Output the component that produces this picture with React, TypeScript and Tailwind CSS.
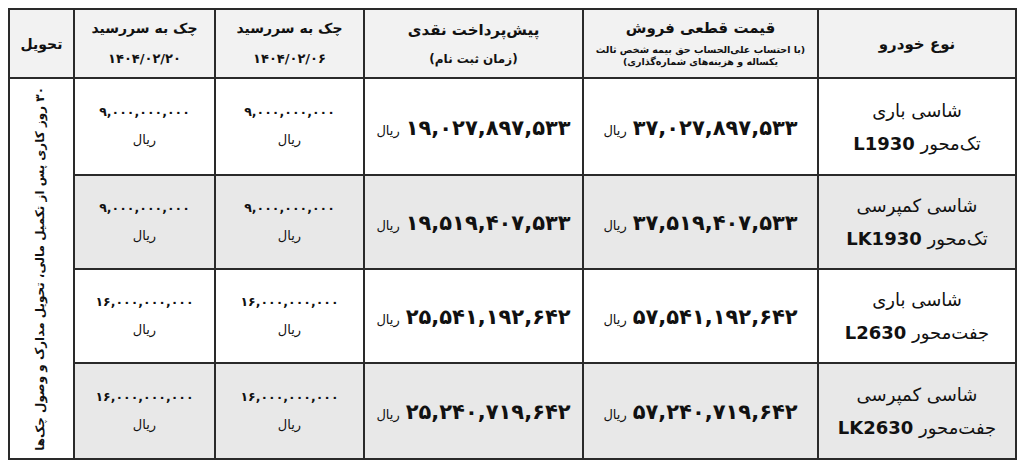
const rows = [
  {
    name: "شاسی باری",
    model: "تک‌محور L1930",
    price: "۳۷,۰۲۷,۸۹۷,۵۳۳",
    prepay: "۱۹,۰۲۷,۸۹۷,۵۳۳",
    check: "۹,۰۰۰,۰۰۰,۰۰۰",
    h: "h-[97px]",
    bg: "bg-white",
  },
  {
    name: "شاسی کمپرسی",
    model: "تک‌محور LK1930",
    price: "۳۷,۵۱۹,۴۰۷,۵۳۳",
    prepay: "۱۹,۵۱۹,۴۰۷,۵۳۳",
    check: "۹,۰۰۰,۰۰۰,۰۰۰",
    h: "h-[94px]",
    bg: "bg-[#e8e8e8]",
  },
  {
    name: "شاسی باری",
    model: "جفت‌محور L2630",
    price: "۵۷,۵۴۱,۱۹۲,۶۴۲",
    prepay: "۲۵,۵۴۱,۱۹۲,۶۴۲",
    check: "۱۶,۰۰۰,۰۰۰,۰۰۰",
    h: "h-[94px]",
    bg: "bg-white",
  },
  {
    name: "شاسی کمپرسی",
    model: "جفت‌محور LK2630",
    price: "۵۷,۲۴۰,۷۱۹,۶۴۲",
    prepay: "۲۵,۲۴۰,۷۱۹,۶۴۲",
    check: "۱۶,۰۰۰,۰۰۰,۰۰۰",
    h: "h-[96px]",
    bg: "bg-[#e8e8e8]",
  },
];

const cell = "border-2 border-[#2a2a2a] text-center align-middle p-0";

function Amount({ value }: { value: string }) {
  return (
    <span className="inline-flex items-baseline gap-1.5 pt-1">
      <span className="text-[21px] font-bold">{value}</span>
      <span className="text-[13px]">ریال</span>
    </span>
  );
}

function Check({ value }: { value: string }) {
  return (
    <div className="flex flex-col items-center gap-2">
      <span className="text-[12.5px] font-bold">{value}</span>
      <span className="text-[13px]">ریال</span>
    </div>
  );
}

export default function App() {
  return (
    <main
      className="w-[1020px] h-[465px] bg-white pt-2 pl-2 text-[#111] overflow-hidden"
      style={{ fontFamily: '"DejaVu Sans", sans-serif' }}
    >
      <table dir="rtl" className="w-[1007px] border-collapse table-fixed">
        <colgroup>
          <col className="w-[198px]" />
          <col className="w-[235px]" />
          <col className="w-[219px]" />
          <col className="w-[149px]" />
          <col className="w-[141px]" />
          <col className="w-[65px]" />
        </colgroup>
        <thead>
          <tr className="h-[69px] bg-[#f2f2f2]">
            <th className={cell}>
              <span className="text-[15px] font-bold">نوع خودرو</span>
            </th>
            <th className={cell}>
              <div className="flex flex-col items-center leading-tight">
                <span className="text-[15px] font-bold mb-1.5">قیمت قطعی فروش</span>
                <span className="text-[9.5px] font-bold">
                  (با احتساب علی‌الحساب حق بیمه شخص ثالث
                </span>
                <span className="text-[9.5px] font-bold">یکساله و هزینه‌های شماره‌گذاری)</span>
              </div>
            </th>
            <th className={cell}>
              <div className="flex flex-col items-center gap-2">
                <span className="text-[15px] font-bold">پیش‌پرداخت نقدی</span>
                <span className="text-[12px] font-bold">(زمان ثبت نام)</span>
              </div>
            </th>
            <th className={cell}>
              <div className="flex flex-col items-center gap-2.5">
                <span className="text-[14px] font-bold">چک به سررسید</span>
                <span className="text-[13px] font-bold">۱۴۰۴/۰۲/۰۶</span>
              </div>
            </th>
            <th className={cell}>
              <div className="flex flex-col items-center gap-2.5">
                <span className="text-[14px] font-bold">چک به سررسید</span>
                <span className="text-[13px] font-bold">۱۴۰۴/۰۲/۲۰</span>
              </div>
            </th>
            <th className={cell}>
              <span className="text-[14px] font-bold">تحویل</span>
            </th>
          </tr>
        </thead>
        <tbody>
          {rows.map((r, i) => (
            <tr key={i} className={`${r.h} ${r.bg}`}>
              <td className={cell}>
                <div className="flex flex-col items-center gap-1.5 text-[18px]">
                  <span>{r.name}</span>
                  <span>
                    {r.model.split(" ")[0]}{" "}
                    <span className="font-bold">{r.model.split(" ")[1]}</span>
                  </span>
                </div>
              </td>
              <td className={cell}>
                <Amount value={r.price} />
              </td>
              <td className={cell}>
                <Amount value={r.prepay} />
              </td>
              <td className={cell}>
                <Check value={r.check} />
              </td>
              <td className={cell}>
                <Check value={r.check} />
              </td>
              {i === 0 && (
                <td rowSpan={4} className={`${cell} bg-white`}>
                  <div className="flex justify-center items-center h-[376px] overflow-hidden pr-1">
                    <span className="[writing-mode:vertical-rl] rotate-180 text-[12px] font-bold whitespace-nowrap">
                      ۳۰ روز کاری پس از تکمیل مالی، تحویل مدارک و وصول چک‌ها
                    </span>
                  </div>
                </td>
              )}
            </tr>
          ))}
        </tbody>
      </table>
    </main>
  );
}
